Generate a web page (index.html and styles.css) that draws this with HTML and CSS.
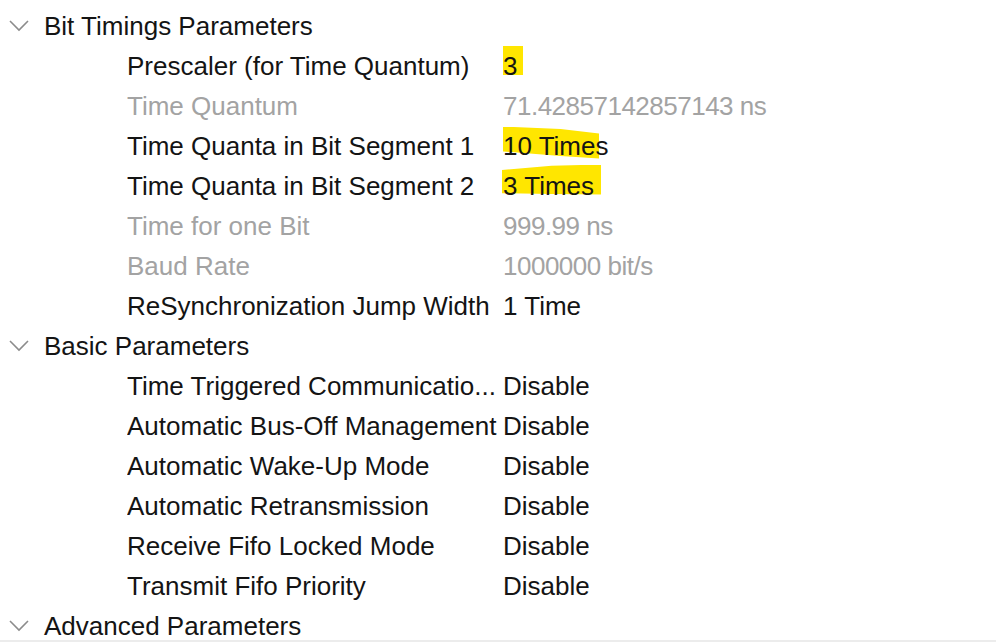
FILE: index.html
```html
<!DOCTYPE html>
<html>
<head>
<meta charset="utf-8">
<link rel="stylesheet" href="styles.css">
</head>
<body>
<div class="page">
  <div class="tree">
    <div class="row head">
      <svg class="chev" width="20" height="12" viewBox="0 0 20 12"><path d="M1 1 L10 10 L19 1" fill="none" stroke="#8c8c8c" stroke-width="1.6"/></svg>
      <span class="title">Bit Timings Parameters</span>
    </div>
    <div class="row item"><span class="label">Prescaler (for Time Quantum)</span><span class="value"><span class="hl hl-a">3</span></span></div>
    <div class="row item dim"><span class="label">Time Quantum</span><span class="value">71.42857142857143 ns</span></div>
    <div class="row item"><span class="label">Time Quanta in Bit Segment 1</span><span class="value"><span class="hl hl-b">10 Times</span></span></div>
    <div class="row item"><span class="label">Time Quanta in Bit Segment 2</span><span class="value"><span class="hl hl-c">3 Times</span></span></div>
    <div class="row item dim"><span class="label">Time for one Bit</span><span class="value">999.99 ns</span></div>
    <div class="row item dim"><span class="label">Baud Rate</span><span class="value">1000000 bit/s</span></div>
    <div class="row item"><span class="label">ReSynchronization Jump Width</span><span class="value">1 Time</span></div>

    <div class="row head">
      <svg class="chev" width="20" height="12" viewBox="0 0 20 12"><path d="M1 1 L10 10 L19 1" fill="none" stroke="#8c8c8c" stroke-width="1.6"/></svg>
      <span class="title">Basic Parameters</span>
    </div>
    <div class="row item"><span class="label">Time Triggered Communicatio...</span><span class="value">Disable</span></div>
    <div class="row item"><span class="label">Automatic Bus-Off Management</span><span class="value">Disable</span></div>
    <div class="row item"><span class="label">Automatic Wake-Up Mode</span><span class="value">Disable</span></div>
    <div class="row item"><span class="label">Automatic Retransmission</span><span class="value">Disable</span></div>
    <div class="row item"><span class="label">Receive Fifo Locked Mode</span><span class="value">Disable</span></div>
    <div class="row item"><span class="label">Transmit Fifo Priority</span><span class="value">Disable</span></div>

    <div class="row head">
      <svg class="chev" width="20" height="12" viewBox="0 0 20 12"><path d="M1 1 L10 10 L19 1" fill="none" stroke="#8c8c8c" stroke-width="1.6"/></svg>
      <span class="title">Advanced Parameters</span>
    </div>
  </div>
</div>
</body>
</html>
```
FILE: styles.css
```css
html, body {
  margin: 0;
  padding: 0;
  background: #ffffff;
}
.page {
  width: 996px;
  height: 642px;
  display: flex;
  flex-direction: column;
  overflow: hidden;
  box-sizing: border-box;
  border-bottom: 2px solid #ececec;
}
.tree {
  flex: 1;
  overflow: hidden;
  padding-top: 6px;
  font-family: "Liberation Sans", Arial, sans-serif;
  font-size: 26px;
  color: #141414;
}
.row {
  height: 40px;
  display: flex;
  align-items: center;
  white-space: nowrap;
}
.head {
  padding-left: 9px;
}
.chev {
  display: block;
  margin-right: 15px;
}
.item {
  padding-left: 127px;
}
.label {
  width: 376px;
  overflow: hidden;
  flex: none;
}
.value {
  flex: none;
}
.dim {
  color: #a3a3a3;
}
.dim .value {
  letter-spacing: -0.5px;
}
.hl {
  position: relative;
  z-index: 0;
}
.hl::before {
  content: "";
  position: absolute;
  z-index: -1;
  background: #ffe600;
}
.hl-a::before {
  left: 0;
  width: 20px;
  top: -5px;
  height: 29px;
}
.hl-b::before {
  left: 0;
  width: 96px;
  top: -4px;
  height: 32px;
  clip-path: polygon(0 0, 60% 8%, 100% 22%, 100% 100%, 60% 92%, 0 78%);
}
.hl-c::before {
  left: -1px;
  width: 99px;
  top: -6px;
  height: 30px;
  clip-path: polygon(0 18%, 50% 4%, 100% 0, 100% 100%, 50% 98%, 0 96%);
}
```
